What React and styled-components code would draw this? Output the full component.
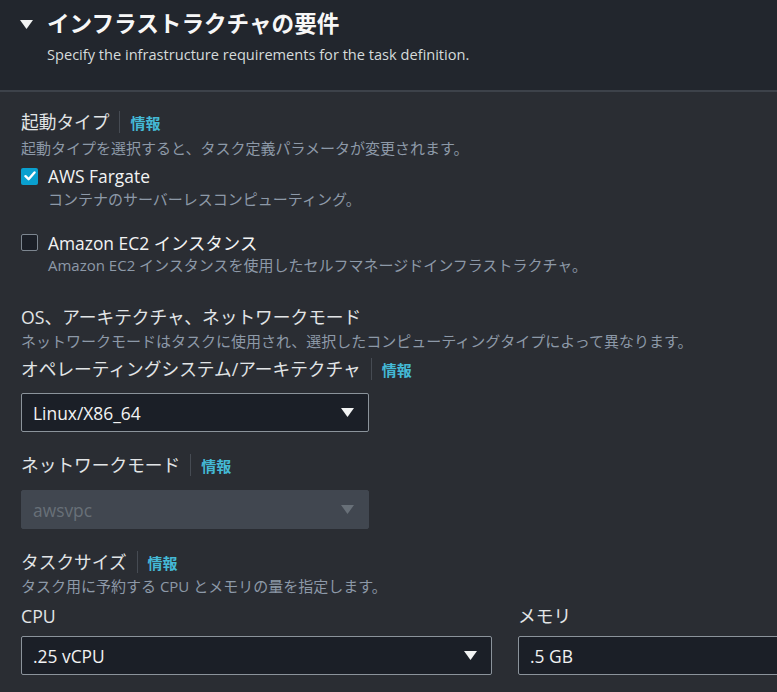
import React from 'react';
import styled, { createGlobalStyle } from 'styled-components';

const GlobalStyle = createGlobalStyle`
  html, body {
    margin: 0;
    padding: 0;
    background: #2a2d33;
  }
  body {
    font-family: "Open Sans", "Noto Sans CJK JP", sans-serif;
    color: #d5dbdb;
    overflow: hidden;
  }
`;

const Page = styled.div`
  width: 777px;
  height: 692px;
  overflow: hidden;
  background: #2a2d33;
`;

const Header = styled.header`
  height: 92px;
  box-sizing: border-box;
  padding: 9px 0 0 20px;
  background: #22262d;
  border-bottom: 2px solid #3d424a;
`;

const TitleRow = styled.div`
  display: flex;
  align-items: center;
  gap: 14px;
`;

const Caret = styled.svg`
  width: 13px;
  height: 9px;
  flex: none;
  fill: ${(p) => p.$color || '#f2f3f3'};
`;

const Title = styled.h2`
  margin: 0;
  font-size: 22.6px;
  line-height: 30px;
  font-weight: 700;
  color: #f7f7f7;
`;

const Subtitle = styled.p`
  margin: 1px 0 0 27px;
  font-size: 14.6px;
  line-height: 28px;
  color: #d5dbdb;
`;

const Body = styled.div`
  padding: 17px 0 0 21px;
`;

const Section = styled.div`
  margin-top: ${(p) => p.$gap || 0}px;
`;

const LabelRow = styled.div`
  display: flex;
  align-items: center;
  height: 26px;
  margin-top: ${(p) => p.$gap || 0}px;
`;

const Label = styled.span`
  font-size: 17.7px;
  line-height: 26px;
  color: #e2e5e7;
  white-space: nowrap;
`;

const Divider = styled.span`
  width: 1px;
  height: 22px;
  margin: 0 10px;
  background: #464b53;
`;

const InfoLink = styled.a`
  font-size: 15px;
  font-weight: 700;
  color: #44b9d6;
  text-decoration: none;
`;

const Description = styled.p`
  margin: 0;
  font-size: 15px;
  line-height: ${(p) => p.$lh || 22}px;
  color: #8d99a8;
  white-space: nowrap;
`;

const OptionRow = styled.label`
  display: flex;
  align-items: center;
  gap: 10px;
  height: 24px;
  margin-top: ${(p) => p.$gap || 0}px;
`;

const Box = styled.span`
  width: 17px;
  height: 17px;
  box-sizing: border-box;
  border-radius: 2px;
  display: flex;
  align-items: center;
  justify-content: center;
  background: ${(p) => (p.$checked ? '#0aa0cf' : '#1b1f27')};
  border: ${(p) => (p.$checked ? 'none' : '1.5px solid #7d8690')};
`;

const OptionText = styled.span`
  font-size: 17.4px;
  font-weight: 400;
  color: #f2f3f3;
  white-space: nowrap;
`;

const OptionHint = styled.p`
  margin: 0 0 0 27px;
  font-size: 15px;
  line-height: 22px;
  color: #8d99a8;
  white-space: nowrap;
`;

const Select = styled.div`
  width: ${(p) => p.$width || 348}px;
  height: 39px;
  box-sizing: border-box;
  margin-top: ${(p) => p.$gap || 0}px;
  padding: 0 14px 0 11px;
  display: flex;
  align-items: center;
  justify-content: space-between;
  border-radius: 2px;
  background: ${(p) => (p.$disabled ? '#414750' : '#1b1f27')};
  border: 1px solid ${(p) => (p.$disabled ? '#414750' : '#8b939b')};
  font-size: 17.4px;
  color: ${(p) => (p.$disabled ? '#687078' : '#f2f3f3')};
`;

const SizeGrid = styled.div`
  display: grid;
  grid-template-columns: 471px 471px;
  column-gap: 26px;
  margin-top: 6px;
`;

const Check = () => (
  <svg width="12" height="10" viewBox="0 0 12 10">
    <path d="M1.5 5.2 L4.6 8.2 L10.5 1.5" fill="none" stroke="#fff" strokeWidth="2.4" strokeLinecap="round" strokeLinejoin="round" />
  </svg>
);

const DownCaret = ({ color }) => (
  <Caret $color={color} viewBox="0 0 13 9">
    <path d="M0 0 H13 L6.5 9 Z" />
  </Caret>
);

const Dropdown = ({ value, width, disabled, gap, caret = true }) => (
  <Select $width={width} $disabled={disabled} $gap={gap}>
    <span>{value}</span>
    {caret && <DownCaret color={disabled ? '#687078' : '#f2f3f3'} />}
  </Select>
);

const Info = ({ children }) => (
  <>
    <Label>{children}</Label>
    <Divider />
    <InfoLink href="#">情報</InfoLink>
  </>
);

export default function App() {
  return (
    <Page>
      <GlobalStyle />
      <Header>
        <TitleRow>
          <DownCaret />
          <Title>インフラストラクチャの要件</Title>
        </TitleRow>
        <Subtitle>Specify the infrastructure requirements for the task definition.</Subtitle>
      </Header>

      <Body>
        <Section>
          <LabelRow>
            <Info>起動タイプ</Info>
          </LabelRow>
          <Description $lh={26}>起動タイプを選択すると、タスク定義パラメータが変更されます。</Description>

          <OptionRow $gap={3}>
            <Box $checked>
              <Check />
            </Box>
            <OptionText>AWS Fargate</OptionText>
          </OptionRow>
          <OptionHint>コンテナのサーバーレスコンピューティング。</OptionHint>

          <OptionRow $gap={20}>
            <Box />
            <OptionText>Amazon EC2 インスタンス</OptionText>
          </OptionRow>
          <OptionHint>Amazon EC2 インスタンスを使用したセルフマネージドインフラストラクチャ。</OptionHint>
        </Section>

        <Section $gap={28}>
          <LabelRow>
            <Label>OS、アーキテクチャ、ネットワークモード</Label>
          </LabelRow>
          <Description>ネットワークモードはタスクに使用され、選択したコンピューティングタイプによって異なります。</Description>

          <LabelRow $gap={4}>
            <Info>オペレーティングシステム/アーキテクチャ</Info>
          </LabelRow>
          <Dropdown value="Linux/X86_64" gap={11} />

          <LabelRow $gap={20}>
            <Info>ネットワークモード</Info>
          </LabelRow>
          <Dropdown value="awsvpc" disabled gap={12} />
        </Section>

        <Section $gap={20}>
          <LabelRow>
            <Info>タスクサイズ</Info>
          </LabelRow>
          <Description>タスク用に予約する CPU とメモリの量を指定します。</Description>

          <SizeGrid>
            <div>
              <LabelRow>
                <Label>CPU</Label>
              </LabelRow>
              <Dropdown value=".25 vCPU" width={471} gap={7} />
            </div>
            <div>
              <LabelRow>
                <Label>メモリ</Label>
              </LabelRow>
              <Dropdown value=".5 GB" width={471} gap={7} />
            </div>
          </SizeGrid>
        </Section>
      </Body>
    </Page>
  );
}
